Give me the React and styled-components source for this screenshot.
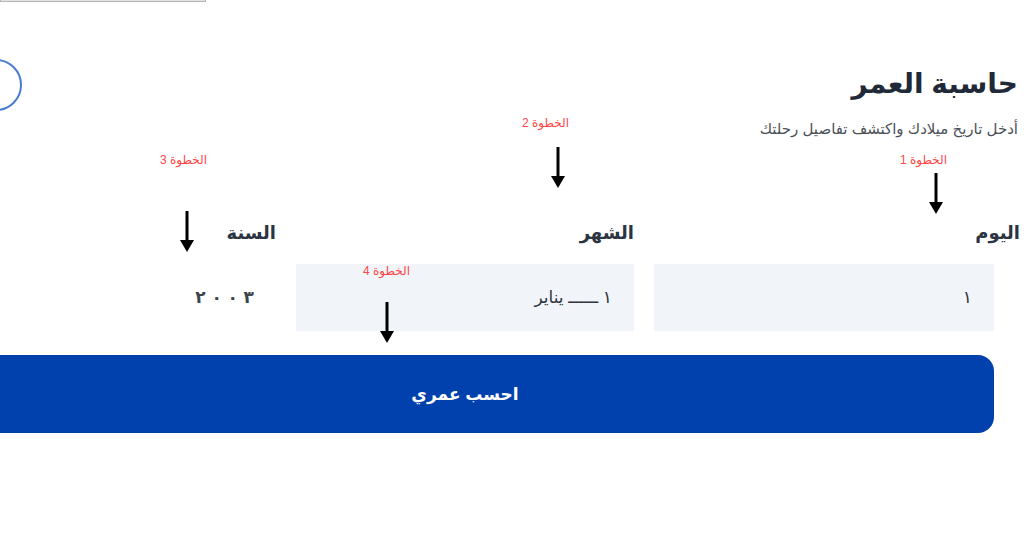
import styled, { createGlobalStyle } from "styled-components";

const GlobalStyle = createGlobalStyle`
  html, body {
    margin: 0;
    padding: 0;
    background: #fff;
  }
  body {
    font-family: "Liberation Sans", "DejaVu Sans", sans-serif;
    overflow: hidden;
  }
`;

const Page = styled.div`
  position: relative;
  width: 1024px;
  height: 538px;
  overflow: hidden;
  direction: rtl;
  background: #fff;
`;

const TopFrame = styled.div`
  width: 204px;
  height: 1px;
  margin-right: auto;
  border: 1px solid #b5b5b5;
  border-top: none;
  box-shadow: inset -1px -1px 0 #e4e4e4;
`;

const Header = styled.header`
  display: flex;
  justify-content: space-between;
  align-items: flex-start;
  width: 1048px;
  margin-right: 6px;
  margin-top: 57px;
`;

const TitleBlock = styled.div`
  margin-top: 5px;
`;

const Title = styled.h1`
  margin: 0;
  font-size: 28px;
  line-height: 40px;
  font-weight: 700;
  color: #1f2937;
`;

const Subtitle = styled.p`
  margin: 14px 0 0;
  font-size: 15px;
  line-height: 22px;
  color: #4b5058;
`;

const ThemeToggle = styled.button`
  width: 52px;
  height: 52px;
  padding: 0;
  border-radius: 50%;
  border: 2px solid #4a7bd1;
  background: transparent;
`;

const Form = styled.form`
  width: 1058px;
  margin-right: 30px;
  margin-top: 81px;
`;

const Fields = styled.div`
  display: grid;
  grid-template-columns: 340px 338px 340px;
  column-gap: 20px;
`;

const Field = styled.div`
  display: flex;
  flex-direction: column;
`;

const Label = styled.label`
  margin-right: ${({ $shift }) => $shift || 0}px;
  font-size: 18px;
  line-height: 24px;
  font-weight: 700;
  color: #2b3442;
  margin-bottom: 19px;
`;

const Box = styled.div`
  height: 67px;
  display: flex;
  align-items: center;
  padding: 0 22px;
  box-sizing: border-box;
  background: ${({ $plain }) => ($plain ? "transparent" : "#f1f5fa")};
  font-size: 17px;
  color: #2f3640;
`;

const YearDigits = styled.span`
  direction: ltr;
  unicode-bidi: bidi-override;
  font-weight: 700;
  color: #3d434b;
  word-spacing: 1px;
`;

const Submit = styled.button`
  display: block;
  width: 100%;
  height: 78px;
  margin-top: 24px;
  border: none;
  border-radius: 16px;
  background: #0041ad;
  color: #fff;
  font-family: inherit;
  font-size: 17px;
  font-weight: 700;
`;

const Step = styled.span`
  position: absolute;
  top: ${({ $y }) => $y}px;
  right: ${({ $r }) => $r}px;
  font-size: 12px;
  line-height: 14px;
  color: #ff4646;
  white-space: nowrap;
`;

const ArrowWrap = styled.svg`
  position: absolute;
  left: ${({ $x }) => $x - 8}px;
  top: ${({ $y }) => $y}px;
`;

const Arrow = ({ x, y }) => (
  <ArrowWrap $x={x} $y={y} width="16" height="41" viewBox="0 0 16 41">
    <line x1="8" y1="0" x2="8" y2="31" stroke="#000" strokeWidth="3" />
    <polygon points="1,29 15,29 8,41" fill="#000" />
  </ArrowWrap>
);

const steps = [
  { n: 1, r: 77, y: 153, ax: 936, ay: 173 },
  { n: 2, r: 455, y: 116, ax: 558, ay: 147 },
  { n: 3, r: 817, y: 153, ax: 187, ay: 211 },
  { n: 4, r: 614, y: 264, ax: 387, ay: 302 },
];

const App = () => {
  return (
    <>
      <GlobalStyle />
      <Page>
        <TopFrame />
        <Header>
          <TitleBlock>
            <Title>حاسبة العمر</Title>
            <Subtitle>أدخل تاريخ ميلادك واكتشف تفاصيل رحلتك</Subtitle>
          </TitleBlock>
          <ThemeToggle type="button" aria-label="toggle" />
        </Header>

        <Form onSubmit={(e) => e.preventDefault()}>
          <Fields>
            <Field>
              <Label $shift={-26}>اليوم</Label>
              <Box>١</Box>
            </Field>
            <Field>
              <Label>الشهر</Label>
              <Box>١ ــــــ يناير</Box>
            </Field>
            <Field>
              <Label>السنة</Label>
              <Box $plain>
                <YearDigits>٢ ٠ ٠ ٣</YearDigits>
              </Box>
            </Field>
          </Fields>
          <Submit type="submit">احسب عمري</Submit>
        </Form>

        {steps.map((s) => (
          <Step key={s.n} $r={s.r} $y={s.y}>
            الخطوة {s.n}
          </Step>
        ))}
        {steps.map((s) => (
          <Arrow key={"a" + s.n} x={s.ax} y={s.ay} />
        ))}
      </Page>
    </>
  );
};

export default App;
